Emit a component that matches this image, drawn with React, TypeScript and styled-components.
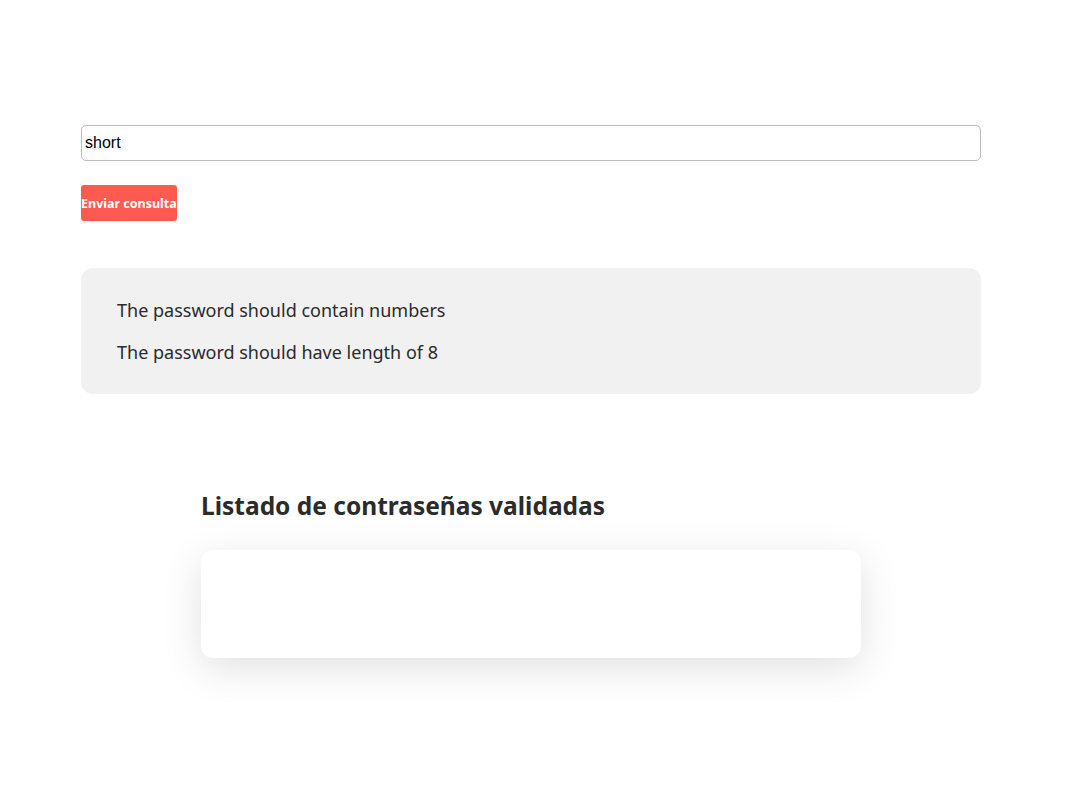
import React from "react";
import styled, { createGlobalStyle } from "styled-components";

const GlobalStyle = createGlobalStyle`
  body {
    margin: 0;
    background: #ffffff;
    font-family: "Trebuchet MS", "Noto Sans", sans-serif;
    color: #2b2b2b;
  }
`;

const Page = styled.main`
  width: 900px;
  padding: 125px 0 120px 81px;
`;

const Form = styled.form`
  display: flex;
  flex-direction: column;
  align-items: flex-start;
  gap: 24px;
`;

const PasswordInput = styled.input`
  box-sizing: border-box;
  width: 900px;
  height: 36px;
  padding: 0 3px;
  border: 1px solid #bdbdbd;
  border-radius: 5px;
  font-family: "Liberation Sans", Arial, sans-serif;
  font-size: 16px;
  color: #000;
  outline: none;
`;

const SubmitButton = styled.button`
  height: 36px;
  padding: 0;
  border: none;
  border-radius: 3px;
  background: #ff5a52;
  color: #ffffff;
  font-family: "Trebuchet MS", "Noto Sans", sans-serif;
  font-weight: 700;
  font-size: 12.5px;
  cursor: pointer;
`;

const ErrorBox = styled.ul`
  list-style: none;
  margin: 47px 0 0;
  padding: 31px 36px;
  background: #f1f1f1;
  border-radius: 12px;
  display: flex;
  flex-direction: column;
  gap: 20px;
`;

const ErrorItem = styled.li`
  font-size: 18px;
  line-height: 22px;
  color: #2b2b2b;
`;

const ListSection = styled.section`
  width: 660px;
  margin: 96px auto 0;
`;

const Heading = styled.h2`
  margin: 0 0 28px;
  font-size: 24.5px;
  line-height: 32px;
  font-weight: 700;
  color: #2b2b2b;
`;

const Card = styled.div`
  height: 108px;
  background: #ffffff;
  border-radius: 12px;
  box-shadow: 0 10px 40px rgba(0, 0, 0, 0.12);
`;

const errors = [
  "The password should contain numbers",
  "The password should have length of 8",
];

export default function App() {
  return (
    <>
      <GlobalStyle />
      <Page>
        <Form onSubmit={(e) => e.preventDefault()}>
          <PasswordInput type="text" defaultValue="short" />
          <SubmitButton type="submit">Enviar consulta</SubmitButton>
        </Form>
        <ErrorBox>
          {errors.map((err) => (
            <ErrorItem key={err}>{err}</ErrorItem>
          ))}
        </ErrorBox>
        <ListSection>
          <Heading>Listado de contraseñas validadas</Heading>
          <Card />
        </ListSection>
      </Page>
    </>
  );
}
